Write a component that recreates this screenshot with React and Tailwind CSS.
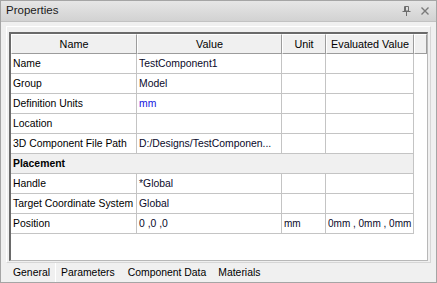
const rows = [
  { name: 'Name', value: 'TestComponent1' },
  { name: 'Group', value: 'Model' },
  { name: 'Definition Units', value: 'mm', blue: true },
  { name: 'Location', value: '' },
  { name: '3D Component File Path', value: 'D:/Designs/TestComponen...' },
  { section: 'Placement' },
  { name: 'Handle', value: '*Global' },
  { name: 'Target Coordinate System', value: 'Global' },
  { name: 'Position', value: '0 ,0 ,0', unit: 'mm', evaluated: '0mm , 0mm , 0mm' },
];

const tabs = ['General', 'Parameters', 'Component Data', 'Materials'];

function PinIcon() {
  return (
    <svg width="9" height="10" viewBox="0 0 9 10" className="text-[#6e6e6e]">
      <path d="M2.5 0.5h4v4.5h-4z M3.5 0.5v4.5" fill="none" stroke="currentColor" strokeWidth="1" />
      <path d="M0.5 5.5h8" stroke="currentColor" strokeWidth="1" />
      <path d="M4.5 5.5v4.5" stroke="currentColor" strokeWidth="1" />
    </svg>
  );
}

function CloseIcon() {
  return (
    <svg width="8" height="8" viewBox="0 0 8 8" className="text-[#7a7a7a]">
      <path d="M0.5 0.5l7 7M7.5 0.5l-7 7" stroke="currentColor" strokeWidth="1.4" />
    </svg>
  );
}

export default function App() {
  return (
    <div className="w-[437px] h-[283px] border border-[#a5a5a5] bg-[#f0f0f0] flex flex-col font-['Liberation_Sans',Arial,sans-serif] text-black overflow-hidden">
      {/* title bar */}
      <div className="h-[21px] shrink-0 flex items-center justify-between pl-[5px] pr-[7px] bg-gradient-to-b from-[#e6e6e6] to-[#d2d2d2] border-b border-[#c2c2c2]">
        <span className="text-[11.5px] text-[#1a1a1a] leading-none">Properties</span>
        <div className="flex items-center gap-[10px]">
          <PinIcon />
          <CloseIcon />
        </div>
      </div>

      {/* body */}
      <div className="flex-1 flex flex-col pt-[4px] px-[5px]">
        <div className="h-[237px] shrink-0 border border-t-white border-l-white border-r-[#d6d6d6] border-b-[#d6d6d6] pt-[5px] pl-[2px] pr-[2px] pb-[1px]">
          <div className="h-full border-t-2 border-l-2 border-t-[#6a6a6a] border-l-[#6a6a6a] border-r border-b border-r-[#b8b8b8] border-b-[#b8b8b8] bg-white text-[10.4px]">
            {/* header */}
            <div className="flex h-[20px] text-[10.8px]">
              {[
                ['Name', 'w-[126px]'],
                ['Value', 'w-[145px]'],
                ['Unit', 'w-[44px]'],
                ['Evaluated Value', 'w-[88px]'],
                ['', 'flex-1'],
              ].map(([label, w], i) => (
                <div
                  key={i}
                  className={`${w} shrink-0 flex items-center justify-center bg-[#f0f0f0] border-t border-l border-t-white border-l-white border-r border-b border-r-[#9c9c9c] border-b-[#9c9c9c]`}
                >
                  {label}
                </div>
              ))}
            </div>

            {/* rows */}
            {rows.map((r, i) =>
              r.section ? (
                <div key={i} className="w-[403px] h-[20px] flex items-center pl-[2px] bg-[#f0f0f0] border-b border-r border-[#c4c4c4] font-bold">
                  {r.section}
                </div>
              ) : (
                <div key={i} className="flex w-[403px] h-[20px] border-b border-[#c4c4c4]">
                  <div className="w-[126px] shrink-0 flex items-center pl-[2px] border-r border-[#c4c4c4] whitespace-nowrap">
                    {r.name}
                  </div>
                  <div className={`w-[145px] shrink-0 flex items-center pl-[2px] border-r border-[#c4c4c4] whitespace-nowrap ${r.blue ? 'text-[#1515e0]' : 'text-[#0a0a2a]'}`}>
                    {r.value}
                  </div>
                  <div className="w-[44px] shrink-0 flex items-center pl-[2px] border-r border-[#c4c4c4] text-[#0a0a2a] text-[10px]">
                    {r.unit}
                  </div>
                  <div className="w-[88px] shrink-0 flex items-center pl-[2px] border-r border-[#c4c4c4] text-[#0a0a2a] text-[10px] whitespace-nowrap">
                    {r.evaluated}
                  </div>
                </div>
              )
            )}
          </div>
        </div>

        {/* tabs */}
        <div className="flex h-[19px] items-center text-[10.4px]">
          {tabs.map((t, i) => (
            <div
              key={t}
              className={
                i === 0
                  ? 'h-full w-[50px] flex items-center pl-[7px] bg-[#f0f0f0] border-r border-white'
                  : i === 1
                  ? 'h-full flex items-center pl-[5px] pr-[7px]'
                  : 'h-full flex items-center px-[6px]'
              }
            >
              {t}
            </div>
          ))}
        </div>
      </div>
    </div>
  );
}
